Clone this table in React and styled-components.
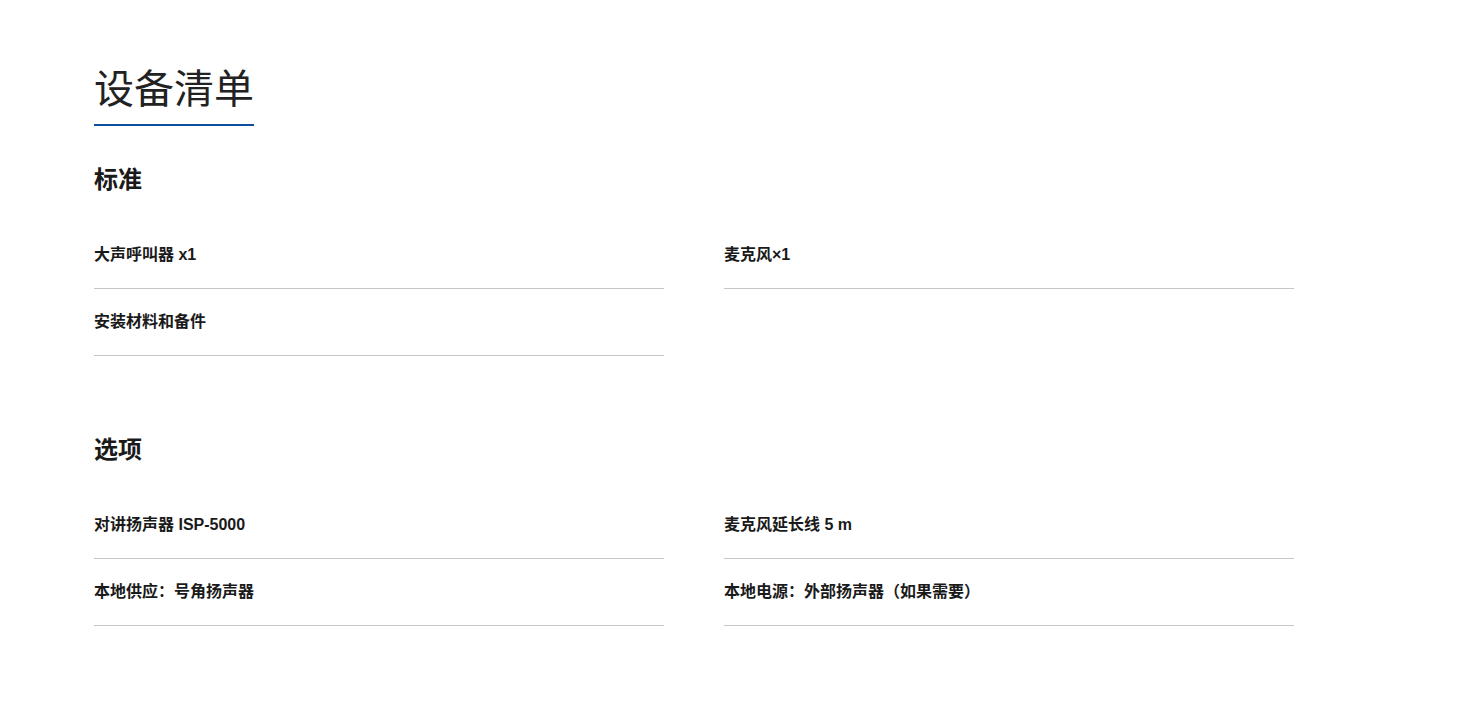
import styled, { createGlobalStyle } from 'styled-components';

const GlobalStyle = createGlobalStyle`
  body {
    margin: 0;
    background: #fff;
    font-family: "Liberation Sans", Arial, "Noto Sans CJK SC", sans-serif;
    color: #222;
  }
`;

const Page = styled.div`
  padding: 65px 0 60px 94px;
  width: 1200px;
`;

const Title = styled.h1`
  display: inline-block;
  margin: 0;
  padding-bottom: 11px;
  border-bottom: 2px solid #0b4f9e;
  font-size: 40px;
  line-height: 48px;
  font-weight: 400;
  color: #222;
`;

const Section = styled.section`
  margin-top: ${(p) => p.$top}px;
`;

const Heading = styled.h2`
  margin: 0 0 28px;
  font-size: 24px;
  line-height: 29px;
  font-weight: 700;
  color: #1a1a1a;
`;

const List = styled.ul`
  display: grid;
  grid-template-columns: repeat(2, 570px);
  column-gap: 60px;
  margin: 0;
  padding: 0;
`;

const Item = styled.li`
  list-style: none;
  padding: 21px 0 21px;
  border-bottom: 1px solid #c6c6c6;
  font-size: 16px;
  line-height: 24px;
  font-weight: 700;
  color: #1a1a1a;
`;

const sections = [
  {
    title: '标准',
    top: 39,
    items: ['大声呼叫器 x1', '麦克风×1', '安装材料和备件'],
  },
  {
    title: '选项',
    top: 79,
    items: [
      '对讲扬声器 ISP-5000',
      '麦克风延长线 5 m',
      '本地供应：号角扬声器',
      '本地电源：外部扬声器（如果需要）',
    ],
  },
];

function App() {
  return (
    <Page>
      <GlobalStyle />
      <Title>设备清单</Title>
      {sections.map((s) => (
        <Section key={s.title} $top={s.top}>
          <Heading>{s.title}</Heading>
          <List>
            {s.items.map((it) => (
              <Item key={it}>{it}</Item>
            ))}
          </List>
        </Section>
      ))}
    </Page>
  );
}

export default App;
